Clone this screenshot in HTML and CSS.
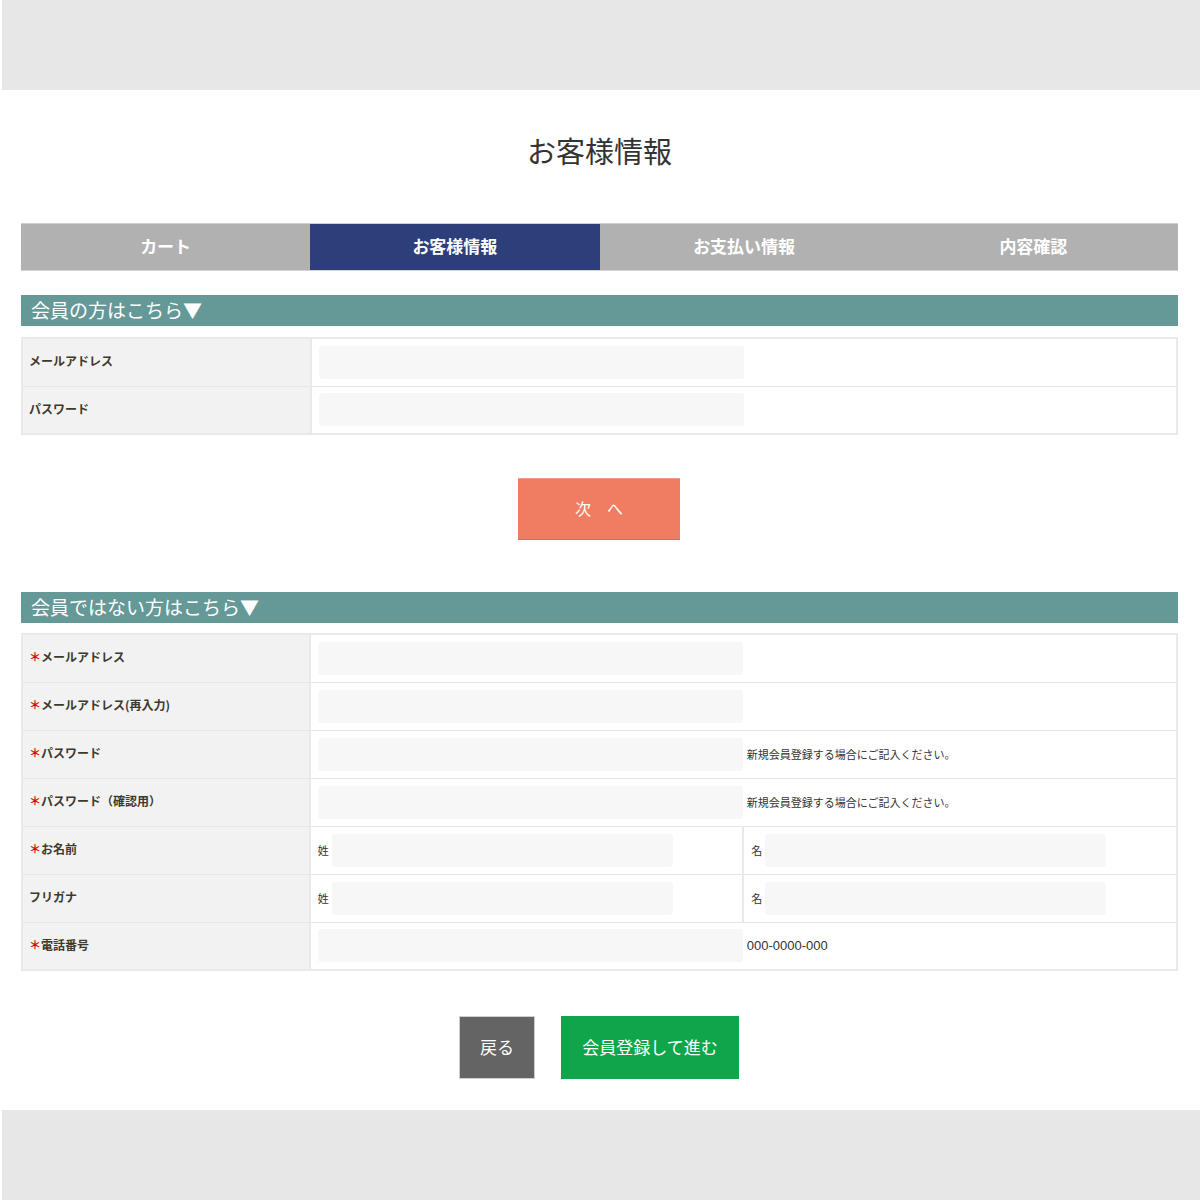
FILE: index.html
```html
<!DOCTYPE html>
<html lang="ja">
<head>
<meta charset="utf-8">
<title>お客様情報</title>
<link rel="stylesheet" href="styles.css">
</head>
<body>
<div class="band"></div>
<main class="page">
  <h1 class="title">お客様情報</h1>
  <ol class="steps">
    <li class="step">カート</li>
    <li class="step active">お客様情報</li>
    <li class="step">お支払い情報</li>
    <li class="step">内容確認</li>
  </ol>

  <h2 class="sec">会員の方はこちら▼</h2>
  <table class="form">
    <tr><th>メールアドレス</th><td colspan="2"><span class="inp"></span></td></tr>
    <tr><th>パスワード</th><td colspan="2"><span class="inp"></span></td></tr>
  </table>
  <div class="next-wrap"><button class="next">次　へ</button></div>

  <h2 class="sec sec2">会員ではない方はこちら▼</h2>
  <table class="form form2">
    <tr><th><span class="req">＊</span>メールアドレス</th><td colspan="2"><span class="inp"></span></td></tr>
    <tr><th><span class="req">＊</span>メールアドレス(再入力)</th><td colspan="2"><span class="inp"></span></td></tr>
    <tr><th><span class="req">＊</span>パスワード</th><td colspan="2"><span class="inp"></span><span class="note">新規会員登録する場合にご記入ください。</span></td></tr>
    <tr><th><span class="req">＊</span>パスワード（確認用）</th><td colspan="2"><span class="inp"></span><span class="note">新規会員登録する場合にご記入ください。</span></td></tr>
    <tr><th><span class="req">＊</span>お名前</th><td class="half"><span class="pre">姓</span><span class="inp sm"></span></td><td class="half right"><span class="pre">名</span><span class="inp sm"></span></td></tr>
    <tr><th>フリガナ</th><td class="half"><span class="pre">姓</span><span class="inp sm"></span></td><td class="half right"><span class="pre">名</span><span class="inp sm"></span></td></tr>
    <tr><th><span class="req">＊</span>電話番号</th><td colspan="2"><span class="inp"></span><span class="tel">000-0000-000</span></td></tr>
  </table>
  <div class="actions">
    <button class="back">戻る</button>
    <button class="go">会員登録して進む</button>
  </div>
</main>
<div class="band bottom"></div>
</body>
</html>
```

FILE: styles.css
```css
* { box-sizing: border-box; }
html, body { margin: 0; padding: 0; background: #fff; }
body {
  font-family: "Noto Sans CJK JP", "Noto Sans", sans-serif;
  color: #333;
  width: 1200px;
}
.band {
  height: 90px;
  margin-left: 2px;
  background: #e7e7e7;
}
.band.bottom { margin-top: 31px; }
.page {
  margin: 0 22px 0 21px;
}
.title {
  margin: 0;
  padding-top: 40px;
  height: 133px;
  text-align: center;
  font-size: 29px;
  font-weight: 400;
  line-height: 40px;
  color: #333;
}
.steps {
  list-style: none;
  margin: 0;
  padding: 0;
  display: grid;
  grid-template-columns: repeat(4, 1fr);
  height: 48px;
  background: #b1b1b1;
  border-top: 1px solid #cfcfcf;
  border-bottom: 1px solid #d4d4d4;
}
.step {
  display: flex;
  align-items: center;
  justify-content: center;
  color: #fff;
  font-weight: 700;
  font-size: 17px;
  padding-bottom: 3px;
}
.step.active { background: #2c3f7b; }
.sec {
  margin: 24px 0 0;
  height: 31px;
  background: #649998;
  color: #fff;
  font-size: 19px;
  font-weight: 400;
  line-height: 29px;
  padding-left: 10px;
}
.sec2 { margin-top: 52px; }
.form {
  margin-top: 11px;
  width: 100%;
  border-collapse: collapse;
  border: 2px solid #e9e9e9;
}
.form2 { margin-top: 10px; }
.form th, .form td {
  border-top: 1px solid #e6e6e6;
  border-bottom: 1px solid #e6e6e6;
  height: 48px;
  padding: 0;
  vertical-align: middle;
}
.form th {
  width: 289px;
  background: #f2f2f2;
  text-align: left;
  font-size: 12px;
  font-weight: 700;
  color: #3b3a2c;
  padding-left: 6px;
  padding-bottom: 3px;
  border-right: 2px solid #e9e9e9;
}
.form td {
  padding-left: 7px;
  font-size: 0;
  white-space: nowrap;
}
.inp {
  display: inline-block;
  vertical-align: middle;
  width: 425px;
  height: 33px;
  background: #f7f7f7;
  border-radius: 3px;
}
.inp.sm { width: 341px; }
.note {
  display: inline-block;
  vertical-align: middle;
  margin-left: 4px;
  font-size: 11px;
  color: #333;
}
.tel {
  display: inline-block;
  vertical-align: middle;
  margin-left: 4px;
  font-size: 13px;
  color: #333;
  font-family: "Liberation Sans", "Noto Sans CJK JP", sans-serif;
}
.pre {
  display: inline-block;
  vertical-align: middle;
  width: 14px;
  font-size: 11px;
  color: #333;
}
.form td.half { width: 434px; }
.form td.right {
  border-left: 2px solid #e9e9e9;
  padding-left: 7px;
}
.next-wrap {
  display: flex;
  justify-content: center;
  margin-top: 43px;
}
.next {
  width: 162px;
  height: 62px;
  margin-right: 1px;
  border: 0;
  border-top: 1px solid #f59a85;
  border-bottom: 1px solid #e8694e;
  background: #f07c62;
  color: #fff;
  font-family: inherit;
  font-size: 16px;
  padding: 0 0 3px;
}
.actions {
  display: flex;
  justify-content: center;
  gap: 26px;
  margin-top: 45px;
  padding-right: 1px;
}
.actions button {
  height: 63px;
  border: 0;
  color: #fff;
  font-family: inherit;
  font-size: 17px;
  padding: 0 0 3px;
}
.back {
  width: 76px;
  background: #646464;
  border: 1px solid #cfcfcf !important;
}
.go {
  width: 178px;
  background: #0fa64b;
}
.req {
  color: #e60012;
  font-size: 12px;
}
```
